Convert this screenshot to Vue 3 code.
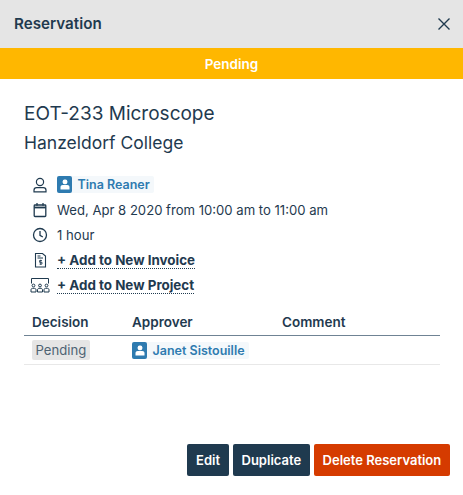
<script setup>
const rows = [
  { id: 'date', text: 'Wed, Apr 8 2020 from 10:00 am to 11:00 am' },
  { id: 'time', text: '1 hour' }
]
</script>

<template>
  <div class="modal">
    <header class="head">
      <h1>Reservation</h1>
      <svg class="close" width="14" height="14" viewBox="0 0 14 14"><path d="M1.500 1.500l11 11M12.500 1.500l-11 11" fill="none" stroke="#1f3a4f" stroke-width="1.400"/></svg>
    </header>
    <div class="banner">Pending</div>
    <main class="body">
      <h2>EOT-233 Microscope</h2>
      <h3>Hanzeldorf College</h3>
      <ul class="info">
        <li>
          <svg class="ico" width="18" height="18" viewBox="0 0 18 18" fill="none" stroke="#1f3a4f" stroke-width="1.200"><circle cx="9" cy="6" r="3.600"/><path d="M3 15.800v-1.500c0-1.500 1.200-2.600 2.700-2.600h6.600c1.500 0 2.700 1.100 2.700 2.600v1.500z"/></svg>
          <span class="chip"><span class="avatar"><svg width="10" height="11" viewBox="0 0 10 11" fill="#fff"><rect x="2.700" y="0.500" width="4.600" height="4.800" rx="1.800"/><path d="M0.500 10.500v-2.500c0-1.300 1-2 2.200-2h4.600c1.200 0 2.200 .7 2.200 2v2.500z"/></svg></span><b>Tina Reaner</b></span>
        </li>
        <li v-for="r in rows" :key="r.id">
          <svg v-if="r.id === 'date'" class="ico" width="18" height="18" viewBox="0 0 18 18" fill="none" stroke="#1f3a4f" stroke-width="1.300"><rect x="3.200" y="4" width="11.600" height="11.500" rx="0.800"/><path d="M3.200 6.500h11.600" stroke-width="1.800"/><path d="M6 2v2.800M12 2v2.800"/></svg>
          <svg v-else class="ico" width="18" height="18" viewBox="0 0 18 18" fill="none" stroke="#1f3a4f" stroke-width="1.300"><circle cx="9" cy="9" r="6.500"/><path d="M9 5v4.300l2.800 1.700"/></svg>
          <span>{{ r.text }}</span>
        </li>
        <li>
          <svg class="ico" width="18" height="18" viewBox="0 0 18 18" fill="none" stroke="#1f3a4f" stroke-width="1.100"><path d="M4.500 2.500h7l3 2.500v11h-10z"/><path d="M6.500 5h3M6.500 7h5.500"/><path d="M11 9.500h-2.500v1.800h2.500v1.800h-2.500M9.700 8.700v5.200" stroke-width="0.800"/></svg>
          <a class="link">+ Add to New Invoice</a>
        </li>
        <li>
          <svg class="ico wide" width="20" height="18" viewBox="0 0 20 18" fill="none" stroke="#1f3a4f" stroke-width="1"><path d="M1.500 7.500V2.500h17V7.500"/><circle cx="3.500" cy="9.500" r="1.400"/><circle cx="10" cy="9.500" r="1.400"/><circle cx="16.500" cy="9.500" r="1.400"/><path d="M1 16v-2c0-1 .7-1.700 1.500-1.700h2c.8 0 1.500 .7 1.500 1.700v2zM7.500 16v-2c0-1 .7-1.700 1.500-1.700h2c.8 0 1.500 .7 1.500 1.700v2zM14 16v-2c0-1 .7-1.700 1.500-1.700h2c.8 0 1.500 .7 1.500 1.700v2z"/></svg>
          <a class="link">+ Add to New Project</a>
        </li>
      </ul>
      <table>
        <thead>
          <tr><th class="c1">Decision</th><th class="c2">Approver</th><th>Comment</th></tr>
        </thead>
        <tbody>
          <tr>
            <td><span class="tag">Pending</span></td>
            <td><span class="chip"><span class="avatar"><svg width="10" height="11" viewBox="0 0 10 11" fill="#fff"><rect x="2.700" y="0.500" width="4.600" height="4.800" rx="1.800"/><path d="M0.500 10.500v-2.500c0-1.300 1-2 2.200-2h4.600c1.200 0 2.200 .7 2.200 2v2.500z"/></svg></span><b>Janet Sistouille</b></span></td>
            <td></td>
          </tr>
        </tbody>
      </table>
    </main>
    <footer class="foot">
      <button class="btn">Edit</button>
      <button class="btn">Duplicate</button>
      <button class="btn danger">Delete Reservation</button>
    </footer>
  </div>
</template>

<style scoped>
.modal { width: 463px; height: 495px; display: flex; flex-direction: column; background: #fff; color: #1f3a4f; font-family: Inter, sans-serif; font-size: 13.125px; overflow: hidden; }
.head { height: 48px; flex: none; background: #e5e5e5; display: flex; align-items: center; justify-content: space-between; padding: 0 12px 0 14px; box-sizing: border-box; }
.head h1 { margin: 0 0 1px; font-size: 15.200px; font-weight: 600; }
.banner { height: 31px; flex: none; background: #ffb700; color: #fff; font-weight: 600; font-size: 13.500px; display: flex; align-items: center; justify-content: center; }
.body { flex: 1; padding: 21px 23px 0 24px; }
h2 { margin: 0; font-size: 19px; font-weight: 400; line-height: 28px; }
h3 { margin: 2px 0 0; font-size: 17.500px; font-weight: 400; line-height: 26px; }
.info { list-style: none; margin: 16px 0 0; padding: 0 0 0 7px; }
.info li { height: 25px; display: flex; align-items: center; }
.ico { width: 18px; flex: none; margin-right: 8px; }
.ico.wide { width: 20px; margin-left: -1px; margin-right: 7px; }
.chip { display: inline-flex; align-items: center; height: 17px; background: #f4f8fb; border-radius: 2px; color: #2e7bb0; padding-right: 4px; font-size: 12.500px; }
.chip b { font-weight: 600; }
.avatar { width: 15px; height: 17px; background: #2e7bb0; border-radius: 2px; display: flex; align-items: center; justify-content: center; margin-right: 5.500px; }
.link { font-weight: 700; font-size: 13.400px; border-bottom: 1px dotted #1f3a4f; line-height: 16px; margin-top: 1px; }
table { width: 100%; border-collapse: collapse; margin-top: 11px; }
th { text-align: left; font-weight: 600; font-size: 13.500px; height: 27px; padding: 0 0 0 8px; border-bottom: 1px solid #6f8394; }
.c1 { width: 92px; }
.c2 { width: 142px; }
td { height: 28px; padding: 0 0 0 8px; border-bottom: 1px solid #e8e8e8; }
.tag { display: inline-block; background: #e5e5e5; color: #4e6373; border-radius: 2px; padding: 0 3.500px; line-height: 20px; font-size: 13.125px; }
.foot { flex: none; display: flex; justify-content: flex-end; gap: 4px; padding: 0 13px 19px 0; }
.btn { height: 32px; border: 0; border-radius: 2px; background: #1f3a4f; color: #fff; font: 600 13px Inter, sans-serif; padding: 0 8.750px; }
.danger { background: #d53b00; }
</style>
